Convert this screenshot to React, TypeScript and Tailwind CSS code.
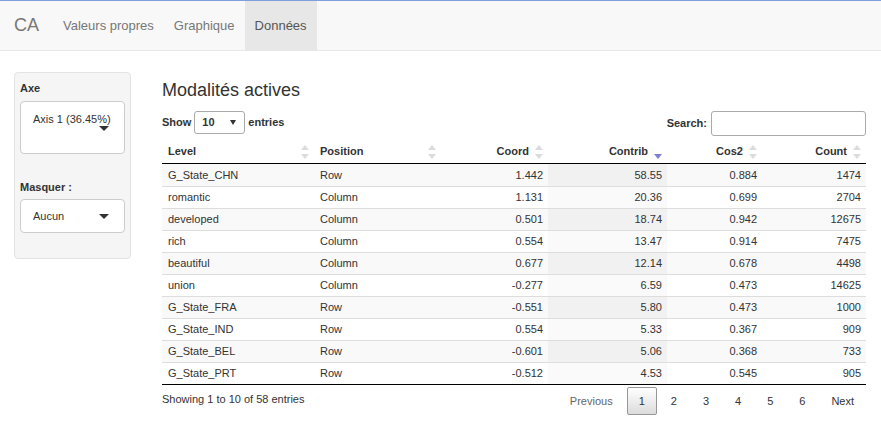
import React from 'react';

const rows = [
  ['G_State_CHN', 'Row', '1.442', '58.55', '0.884', '1474'],
  ['romantic', 'Column', '1.131', '20.36', '0.699', '2704'],
  ['developed', 'Column', '0.501', '18.74', '0.942', '12675'],
  ['rich', 'Column', '0.554', '13.47', '0.914', '7475'],
  ['beautiful', 'Column', '0.677', '12.14', '0.678', '4498'],
  ['union', 'Column', '-0.277', '6.59', '0.473', '14625'],
  ['G_State_FRA', 'Row', '-0.551', '5.80', '0.473', '1000'],
  ['G_State_IND', 'Row', '0.554', '5.33', '0.367', '909'],
  ['G_State_BEL', 'Row', '-0.601', '5.06', '0.368', '733'],
  ['G_State_PRT', 'Row', '-0.512', '4.53', '0.545', '905'],
];

function SortIcon({ active }: { active?: boolean }) {
  return (
    <svg width="8" height="14" viewBox="0 0 8 14" className="shrink-0">
      {!active && <polygon points="0,5 4,0 8,5" fill="#dcdcdc" />}
      <polygon points="0,9 8,9 4,14" fill={active ? '#7f7fd9' : '#dcdcdc'} />
    </svg>
  );
}

function Caret({ w = 5, h = 5 }: { w?: number; h?: number }) {
  return (
    <svg width={w * 2} height={h} viewBox={`0 0 ${w * 2} ${h}`} className="shrink-0">
      <polygon points={`0,0 ${w * 2},0 ${w},${h}`} fill="#333" />
    </svg>
  );
}

const cols = 'grid grid-cols-[152px_127px_107px_119px_95px_104px]';

export default function App() {
  const headers = ['Level', 'Position', 'Coord', 'Contrib', 'Cos2', 'Count'];

  return (
    <div className="min-h-screen bg-white text-[#333] text-[11px] font-['Liberation_Sans',Arial,sans-serif]">
      {/* Navbar */}
      <nav className="h-[51px] flex bg-[#f8f8f8] border-t border-t-[#7e9fdc] border-b border-b-[#e7e7e7]">
        <div className="px-[14px] flex items-center text-[18px] text-[#777]">CA</div>
        <a className="px-[10px] flex items-center text-[13px] text-[#777]">Valeurs propres</a>
        <a className="px-[10px] flex items-center text-[13px] text-[#777]">Graphique</a>
        <a className="px-[10px] flex items-center text-[13px] text-[#555] bg-[#e7e7e7]">Données</a>
      </nav>

      <div className="flex items-start pt-[21px]">
        {/* Sidebar */}
        <aside className="ml-[14px] w-[117px] bg-[#f5f5f5] border border-[#e3e3e3] rounded-[4px] px-[5px] pt-[7px] pb-[25px]">
          <label className="block font-bold leading-[16px] mb-[5px]">Axe</label>
          <div className="h-[53px] bg-white border border-[#ccc] rounded-[4px] pl-[12px] pt-[9px]">
            <div className="leading-[16px]">Axis 1 (36.45%)</div>
            <div className="flex justify-end pr-[15px] -mt-[1px]">
              <Caret />
            </div>
          </div>
          <label className="block font-bold leading-[16px] mt-[25px] mb-[4px]">Masquer :</label>
          <div className="h-[34px] bg-white border border-[#ccc] rounded-[4px] pl-[12px] pr-[15px] flex items-center justify-between">
            <span>Aucun</span>
            <Caret />
          </div>
        </aside>

        {/* Main */}
        <main className="ml-[31px] w-[704px] pt-[8px]">
          <h4 className="text-[18px] leading-[20px] font-medium">Modalités actives</h4>

          <div className="mt-[11px] h-[25px] flex justify-between items-start">
            <div className="h-[23px] flex items-center gap-[3px] font-bold">
              <span>Show</span>
              <div className="w-[51px] h-[23px] border border-[#aaa] rounded-[3px] bg-white flex items-center justify-between pl-[7px] pr-[8px]">
                <span>10</span>
                <Caret w={3} h={5} />
              </div>
              <span>entries</span>
            </div>
            <div className="h-[25px] flex items-center gap-[4px] font-bold">
              <span>Search:</span>
              <div className="w-[155px] h-[25px] border border-[#aaa] rounded-[3px] bg-white" />
            </div>
          </div>

          {/* Table */}
          <div className="mt-[4px]">
            <div className={`${cols} h-[24px] border-b border-black font-bold`}>
              {headers.map((h, i) =>
                i < 2 ? (
                  <div key={h} className="flex items-center justify-between pl-[6px] pr-[5px]">
                    <span>{h}</span>
                    <SortIcon />
                  </div>
                ) : (
                  <div key={h} className="flex items-center justify-end gap-[6px] pr-[5px]">
                    <span>{h}</span>
                    <SortIcon active={h === 'Contrib'} />
                  </div>
                )
              )}
            </div>
            {rows.map((r, ri) => (
              <div
                key={r[0]}
                className={`${cols} h-[22px] ${ri > 0 ? 'border-t border-[#ddd]' : ''} ${
                  ri % 2 === 0 ? 'bg-[#f9f9f9]' : 'bg-white'
                }`}
              >
                {r.map((c, ci) => (
                  <div
                    key={ci}
                    className={`flex items-center px-[5px] ${ci < 2 ? 'justify-start pl-[6px]' : 'justify-end'} ${
                      ci === 3 ? (ri % 2 === 0 ? 'bg-[#f1f1f1]' : 'bg-[#fafafa]') : ''
                    }`}
                  >
                    {c}
                  </div>
                ))}
              </div>
            ))}
            <div className="border-t border-black" />
          </div>

          {/* Footer */}
          <div className="flex justify-between items-start">
            <div className="pt-[6px] leading-[16px]">Showing 1 to 10 of 58 entries</div>
            <div className="pt-[2px] flex">
              <span className="px-[11px] py-[5px] leading-[16px] border border-transparent text-[#666]">Previous</span>
              <span className="ml-[2px] px-[11px] py-[5px] leading-[16px] border border-[#979797] rounded-[2px] bg-linear-to-b from-white to-[#dcdcdc]">
                1
              </span>
              {['2', '3', '4', '5', '6'].map((n) => (
                <span key={n} className="ml-[2px] px-[11px] py-[5px] leading-[16px] border border-transparent">
                  {n}
                </span>
              ))}
              <span className="ml-[2px] px-[11px] py-[5px] leading-[16px] border border-transparent">Next</span>
            </div>
          </div>
        </main>
      </div>
    </div>
  );
}
